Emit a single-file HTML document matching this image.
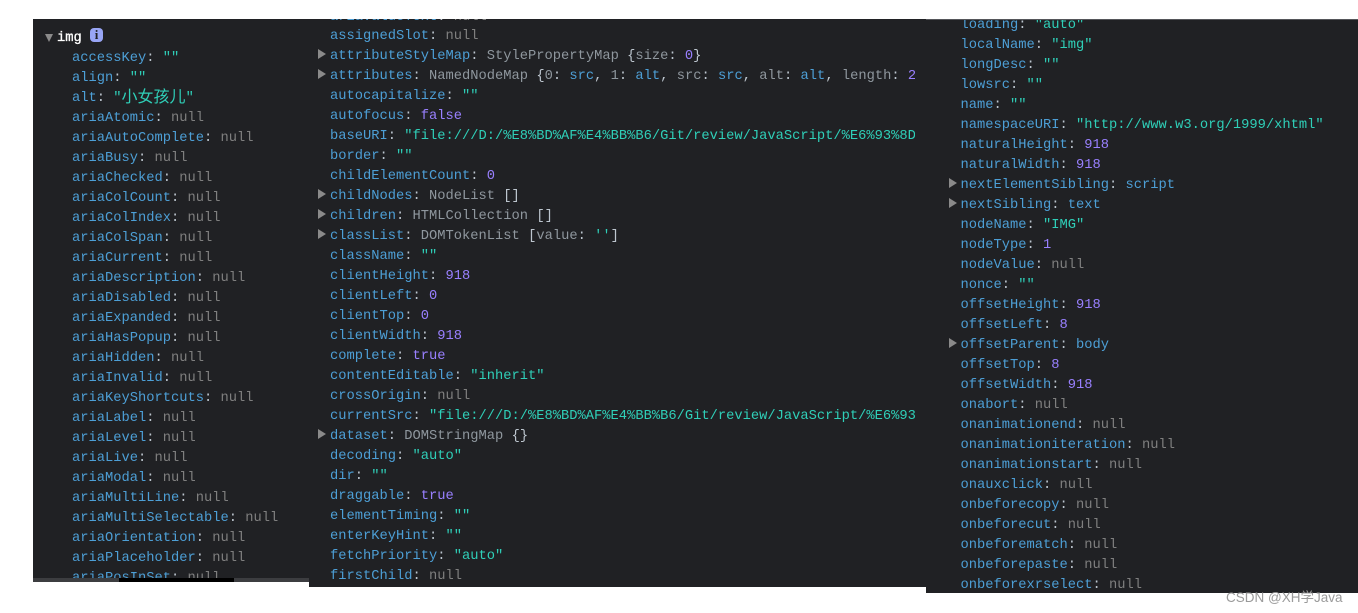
<!DOCTYPE html>
<html><head><meta charset="utf-8"><style>
html,body{margin:0;padding:0;background:#fff;width:1358px;height:613px;overflow:hidden}
.p{position:absolute;background:#202124;overflow:hidden;font:13.75px/20px "Liberation Mono","Noto Sans CJK SC",monospace;color:#bdc6cf}
.r{position:absolute;white-space:pre;height:20px;margin-top:2px}
.k{color:#4d9fd6}.s{color:#2fcfb8}.n{color:#7f7f7f}.v{color:#9980ff}.g{color:#8f979e}.c{color:#bdc6cf}
.a{position:absolute;width:0;height:0;border-left:8px solid #8a8a8a;border-top:5px solid transparent;border-bottom:5px solid transparent}
</style></head><body>

<div class="p" style="left:33px;top:19px;width:276px;height:559px">
<div style="position:absolute;left:12px;top:15px;width:0;height:0;border-top:8px solid #8a8a8a;border-left:4.5px solid transparent;border-right:4.5px solid transparent"></div>
<div class="r" style="left:24px;top:8px;color:#fff;-webkit-text-stroke:.3px #fff">img</div>
<div style="position:absolute;left:57px;top:9px;width:13px;height:14px;border-radius:4px;background:#98a5f5;color:#202124;font:bold 13px/14px 'Liberation Serif',serif;text-align:center">i</div>
<div class="r" style="left:39px;top:28px"><span class="k">accessKey</span>: <span class="s">""</span></div>
<div class="r" style="left:39px;top:48px"><span class="k">align</span>: <span class="s">""</span></div>
<div class="r" style="left:39px;top:68px"><span class="k">alt</span>: <span class="s">"<span style="font-size:16px;line-height:0;position:relative;top:1px">小女孩儿</span>"</span></div>
<div class="r" style="left:39px;top:88px"><span class="k">ariaAtomic</span>: <span class="n">null</span></div>
<div class="r" style="left:39px;top:108px"><span class="k">ariaAutoComplete</span>: <span class="n">null</span></div>
<div class="r" style="left:39px;top:128px"><span class="k">ariaBusy</span>: <span class="n">null</span></div>
<div class="r" style="left:39px;top:148px"><span class="k">ariaChecked</span>: <span class="n">null</span></div>
<div class="r" style="left:39px;top:168px"><span class="k">ariaColCount</span>: <span class="n">null</span></div>
<div class="r" style="left:39px;top:188px"><span class="k">ariaColIndex</span>: <span class="n">null</span></div>
<div class="r" style="left:39px;top:208px"><span class="k">ariaColSpan</span>: <span class="n">null</span></div>
<div class="r" style="left:39px;top:228px"><span class="k">ariaCurrent</span>: <span class="n">null</span></div>
<div class="r" style="left:39px;top:248px"><span class="k">ariaDescription</span>: <span class="n">null</span></div>
<div class="r" style="left:39px;top:268px"><span class="k">ariaDisabled</span>: <span class="n">null</span></div>
<div class="r" style="left:39px;top:288px"><span class="k">ariaExpanded</span>: <span class="n">null</span></div>
<div class="r" style="left:39px;top:308px"><span class="k">ariaHasPopup</span>: <span class="n">null</span></div>
<div class="r" style="left:39px;top:328px"><span class="k">ariaHidden</span>: <span class="n">null</span></div>
<div class="r" style="left:39px;top:348px"><span class="k">ariaInvalid</span>: <span class="n">null</span></div>
<div class="r" style="left:39px;top:368px"><span class="k">ariaKeyShortcuts</span>: <span class="n">null</span></div>
<div class="r" style="left:39px;top:388px"><span class="k">ariaLabel</span>: <span class="n">null</span></div>
<div class="r" style="left:39px;top:408px"><span class="k">ariaLevel</span>: <span class="n">null</span></div>
<div class="r" style="left:39px;top:428px"><span class="k">ariaLive</span>: <span class="n">null</span></div>
<div class="r" style="left:39px;top:448px"><span class="k">ariaModal</span>: <span class="n">null</span></div>
<div class="r" style="left:39px;top:468px"><span class="k">ariaMultiLine</span>: <span class="n">null</span></div>
<div class="r" style="left:39px;top:488px"><span class="k">ariaMultiSelectable</span>: <span class="n">null</span></div>
<div class="r" style="left:39px;top:508px"><span class="k">ariaOrientation</span>: <span class="n">null</span></div>
<div class="r" style="left:39px;top:528px"><span class="k">ariaPlaceholder</span>: <span class="n">null</span></div>
<div class="r" style="left:39px;top:548px"><span class="k">ariaPosInSet</span>: <span class="n">null</span></div>
</div>
<div style="position:absolute;left:33px;top:578px;width:276px;height:4px;background:#3c3d40"></div>
<div style="position:absolute;left:119px;top:578px;width:115px;height:4px;background:#000"></div>

<div class="p" style="left:309px;top:19px;width:617px;height:568px">
<div style="position:absolute;left:0;top:0;width:606px;height:568px;overflow:hidden">
<div class="r" style="left:21px;top:-13px"><span class="k">ariaValueText</span>: <span class="n">null</span></div>
<div class="r" style="left:21px;top:6px"><span class="k">assignedSlot</span>: <span class="n">null</span></div>
<div class="a" style="left:9px;top:30px"></div><div class="r" style="left:21px;top:26px"><span class="k">attributeStyleMap</span>: <span class="g">StylePropertyMap</span> {<span class="g">size</span>: <span class="v">0</span>}</div>
<div class="a" style="left:9px;top:50px"></div><div class="r" style="left:21px;top:46px"><span class="k">attributes</span>: <span class="g">NamedNodeMap</span> {<span class="g">0</span>: <span class="k">src</span>, <span class="g">1</span>: <span class="k">alt</span>, <span class="g">src</span>: <span class="k">src</span>, <span class="g">alt</span>: <span class="k">alt</span>, <span class="g">length</span>: <span class="v">2</span></div>
<div class="r" style="left:21px;top:66px"><span class="k">autocapitalize</span>: <span class="s">""</span></div>
<div class="r" style="left:21px;top:86px"><span class="k">autofocus</span>: <span class="v">false</span></div>
<div class="r" style="left:21px;top:106px"><span class="k">baseURI</span>: <span class="s">"file:///D:/%E8%BD%AF%E4%BB%B6/Git/review/JavaScript/%E6%93%8D</span></div>
<div class="r" style="left:21px;top:126px"><span class="k">border</span>: <span class="s">""</span></div>
<div class="r" style="left:21px;top:146px"><span class="k">childElementCount</span>: <span class="v">0</span></div>
<div class="a" style="left:9px;top:170px"></div><div class="r" style="left:21px;top:166px"><span class="k">childNodes</span>: <span class="g">NodeList</span> []</div>
<div class="a" style="left:9px;top:190px"></div><div class="r" style="left:21px;top:186px"><span class="k">children</span>: <span class="g">HTMLCollection</span> []</div>
<div class="a" style="left:9px;top:210px"></div><div class="r" style="left:21px;top:206px"><span class="k">classList</span>: <span class="g">DOMTokenList</span> [<span class="g">value</span>: <span class="s">''</span>]</div>
<div class="r" style="left:21px;top:226px"><span class="k">className</span>: <span class="s">""</span></div>
<div class="r" style="left:21px;top:246px"><span class="k">clientHeight</span>: <span class="v">918</span></div>
<div class="r" style="left:21px;top:266px"><span class="k">clientLeft</span>: <span class="v">0</span></div>
<div class="r" style="left:21px;top:286px"><span class="k">clientTop</span>: <span class="v">0</span></div>
<div class="r" style="left:21px;top:306px"><span class="k">clientWidth</span>: <span class="v">918</span></div>
<div class="r" style="left:21px;top:326px"><span class="k">complete</span>: <span class="v">true</span></div>
<div class="r" style="left:21px;top:346px"><span class="k">contentEditable</span>: <span class="s">"inherit"</span></div>
<div class="r" style="left:21px;top:366px"><span class="k">crossOrigin</span>: <span class="n">null</span></div>
<div class="r" style="left:21px;top:386px"><span class="k">currentSrc</span>: <span class="s">"file:///D:/%E8%BD%AF%E4%BB%B6/Git/review/JavaScript/%E6%93</span></div>
<div class="a" style="left:9px;top:410px"></div><div class="r" style="left:21px;top:406px"><span class="k">dataset</span>: <span class="g">DOMStringMap</span> {}</div>
<div class="r" style="left:21px;top:426px"><span class="k">decoding</span>: <span class="s">"auto"</span></div>
<div class="r" style="left:21px;top:446px"><span class="k">dir</span>: <span class="s">""</span></div>
<div class="r" style="left:21px;top:466px"><span class="k">draggable</span>: <span class="v">true</span></div>
<div class="r" style="left:21px;top:486px"><span class="k">elementTiming</span>: <span class="s">""</span></div>
<div class="r" style="left:21px;top:506px"><span class="k">enterKeyHint</span>: <span class="s">""</span></div>
<div class="r" style="left:21px;top:526px"><span class="k">fetchPriority</span>: <span class="s">"auto"</span></div>
<div class="r" style="left:21px;top:546px"><span class="k">firstChild</span>: <span class="n">null</span></div>
</div>
</div>

<div class="p" style="left:926px;top:19px;width:432px;height:574px">
<div style="position:absolute;left:0;top:0;width:432px;height:1px;background:#55565a;z-index:2"></div>
<div class="r" style="left:34.5px;top:-5px"><span class="k">loading</span>: <span class="s">"auto"</span></div>
<div class="r" style="left:34.5px;top:15px"><span class="k">localName</span>: <span class="s">"img"</span></div>
<div class="r" style="left:34.5px;top:35px"><span class="k">longDesc</span>: <span class="s">""</span></div>
<div class="r" style="left:34.5px;top:55px"><span class="k">lowsrc</span>: <span class="s">""</span></div>
<div class="r" style="left:34.5px;top:75px"><span class="k">name</span>: <span class="s">""</span></div>
<div class="r" style="left:34.5px;top:95px"><span class="k">namespaceURI</span>: <span class="s">"http://www.w3.org/1999/xhtml"</span></div>
<div class="r" style="left:34.5px;top:115px"><span class="k">naturalHeight</span>: <span class="v">918</span></div>
<div class="r" style="left:34.5px;top:135px"><span class="k">naturalWidth</span>: <span class="v">918</span></div>
<div class="a" style="left:23px;top:159px"></div><div class="r" style="left:34.5px;top:155px"><span class="k">nextElementSibling</span>: <span class="k">script</span></div>
<div class="a" style="left:23px;top:179px"></div><div class="r" style="left:34.5px;top:175px"><span class="k">nextSibling</span>: <span class="k">text</span></div>
<div class="r" style="left:34.5px;top:195px"><span class="k">nodeName</span>: <span class="s">"IMG"</span></div>
<div class="r" style="left:34.5px;top:215px"><span class="k">nodeType</span>: <span class="v">1</span></div>
<div class="r" style="left:34.5px;top:235px"><span class="k">nodeValue</span>: <span class="n">null</span></div>
<div class="r" style="left:34.5px;top:255px"><span class="k">nonce</span>: <span class="s">""</span></div>
<div class="r" style="left:34.5px;top:275px"><span class="k">offsetHeight</span>: <span class="v">918</span></div>
<div class="r" style="left:34.5px;top:295px"><span class="k">offsetLeft</span>: <span class="v">8</span></div>
<div class="a" style="left:23px;top:319px"></div><div class="r" style="left:34.5px;top:315px"><span class="k">offsetParent</span>: <span class="k">body</span></div>
<div class="r" style="left:34.5px;top:335px"><span class="k">offsetTop</span>: <span class="v">8</span></div>
<div class="r" style="left:34.5px;top:355px"><span class="k">offsetWidth</span>: <span class="v">918</span></div>
<div class="r" style="left:34.5px;top:375px"><span class="k">onabort</span>: <span class="n">null</span></div>
<div class="r" style="left:34.5px;top:395px"><span class="k">onanimationend</span>: <span class="n">null</span></div>
<div class="r" style="left:34.5px;top:415px"><span class="k">onanimationiteration</span>: <span class="n">null</span></div>
<div class="r" style="left:34.5px;top:435px"><span class="k">onanimationstart</span>: <span class="n">null</span></div>
<div class="r" style="left:34.5px;top:455px"><span class="k">onauxclick</span>: <span class="n">null</span></div>
<div class="r" style="left:34.5px;top:475px"><span class="k">onbeforecopy</span>: <span class="n">null</span></div>
<div class="r" style="left:34.5px;top:495px"><span class="k">onbeforecut</span>: <span class="n">null</span></div>
<div class="r" style="left:34.5px;top:515px"><span class="k">onbeforematch</span>: <span class="n">null</span></div>
<div class="r" style="left:34.5px;top:535px"><span class="k">onbeforepaste</span>: <span class="n">null</span></div>
<div class="r" style="left:34.5px;top:555px"><span class="k">onbeforexrselect</span>: <span class="n">null</span></div>
</div>

<div style="position:absolute;left:1226px;top:589px;font:13.5px/17px 'Liberation Sans','Noto Sans CJK SC',sans-serif;color:#9a9a9a;white-space:pre">CSDN @XH学Java</div>
</body></html>
